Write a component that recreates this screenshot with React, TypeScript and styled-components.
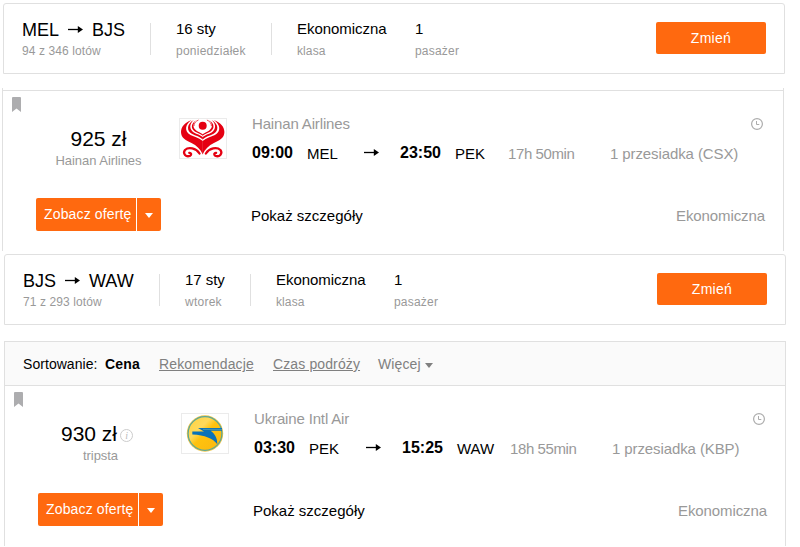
import React from "react";
import styled, { createGlobalStyle } from "styled-components";

interface Search {
  from: string;
  to: string;
  results: string;
  date: string;
  weekday: string;
  routeWidth: number;
  dateWidth: number;
}

interface Flight {
  price: string;
  seller: string;
  hasInfo?: boolean;
  airline: string;
  logo: React.ReactNode;
  departure: string;
  origin: string;
  arrival: string;
  destination: string;
  duration: string;
  stops: string;
}

const Arrow = () => (
  <svg width="15" height="8" viewBox="0 0 15 8">
    <path d="M0 3.5H11" stroke="#000" strokeWidth="1.3" />
    <path d="M9.8 0L15 3.5L9.8 7Z" fill="#000" />
  </svg>
);

const Bookmark = () => (
  <svg width="9" height="15" viewBox="0 0 9 15">
    <path d="M0 1Q0 0 1 0H8Q9 0 9 1V15L4.5 11.5L0 15Z" fill="#adadaf" />
  </svg>
);

const Clock = () => (
  <svg width="12" height="12" viewBox="0 0 12 12" fill="none" stroke="#acacac">
    <circle cx="6" cy="6" r="5.4" strokeWidth="1.2" />
    <path d="M5.5 3V6.5H8.3" strokeWidth="1" />
  </svg>
);

const HainanHalf = () => (
  <g>
    <path
      d="M12.5 2.2C6 4 2 9 2 14C2 20 7 22.5 12.5 25C17.5 27.5 21.5 31 23.8 36.5V23C20 19.8 15.5 19 11.5 17C5 13.5 6 6 12.5 2.2Z"
      fill="#e50012"
    />
    <path
      d="M14.8 2C7.5 6 7.5 12.8 12.8 15.8C17 18 21 18.6 23.8 21.5V19C21 16.7 18 16.2 14.8 14.4C10.3 11.5 10 6 14.8 2Z"
      fill="#e50012"
    />
    <path
      d="M17.4 2C11.5 5.5 11.8 11 15.8 13.4C18.5 15 21.5 15.7 23.8 17.8V16.2C21.5 14.4 19.2 13.8 17.2 12.4C13.6 9.8 13.5 5.5 17.4 2Z"
      fill="#e50012"
    />
    <path
      d="M19.5 2C16.5 3.3 14.9 5.5 15 8"
      fill="none"
      stroke="#e50012"
      strokeWidth="0.7"
    />
    <path
      d="M20.5 35.5C17 30 9.5 28.8 6 32C3.4 35.6 7 39.6 11.2 37.7C12.8 36.3 12 34.7 10.3 34.9"
      fill="none"
      stroke="#e50012"
      strokeWidth="2.3"
      strokeLinecap="round"
    />
  </g>
);

const HainanLogo = () => (
  <svg width="46" height="39" viewBox="1 1 46 39">
    <HainanHalf />
    <g transform="translate(47.4 0) scale(-1 1)">
      <HainanHalf />
    </g>
    <circle cx="23.7" cy="7.7" r="4" fill="#e50012" />
  </svg>
);

const UkraineLogo = () => (
  <svg width="46" height="39" viewBox="1 1 46 39">
    <defs>
      <linearGradient id="sun" x1="0" y1="0" x2="1" y2="1">
        <stop offset="0" stopColor="#ffd23c" />
        <stop offset="0.35" stopColor="#ffd95c" />
        <stop offset="0.5" stopColor="#ffc20e" />
        <stop offset="1" stopColor="#f9b712" />
      </linearGradient>
    </defs>
    <circle cx="24" cy="20.5" r="18.2" fill="#efc548" />
    <circle cx="24" cy="20.5" r="16.9" fill="url(#sun)" stroke="#57a69b" strokeWidth="1.2" />
    <path d="M17 15H41V17.8H29.5C33.5 20.5 36.3 24.5 36.3 31.2C32 25.5 24 22 11.3 21.5V18.4H23Z" fill="#0a72b8" />
    <path d="M22 16.4H41" stroke="#5f9fa8" strokeWidth="0.8" />
  </svg>
);

const searches: Search[] = [
  {
    from: "MEL",
    to: "BJS",
    results: "94 z 346 lotów",
    date: "16 sty",
    weekday: "poniedziałek",
    routeWidth: 128,
    dateWidth: 95,
  },
  {
    from: "BJS",
    to: "WAW",
    results: "71 z 293 lotów",
    date: "17 sty",
    weekday: "wtorek",
    routeWidth: 136,
    dateWidth: 65,
  },
];

const flights: Flight[] = [
  {
    price: "925 zł",
    seller: "Hainan Airlines",
    airline: "Hainan Airlines",
    logo: <HainanLogo />,
    departure: "09:00",
    origin: "MEL",
    arrival: "23:50",
    destination: "PEK",
    duration: "17h 50min",
    stops: "1 przesiadka (CSX)",
  },
  {
    price: "930 zł",
    seller: "tripsta",
    hasInfo: true,
    airline: "Ukraine Intl Air",
    logo: <UkraineLogo />,
    departure: "03:30",
    origin: "PEK",
    arrival: "15:25",
    destination: "WAW",
    duration: "18h 55min",
    stops: "1 przesiadka (KBP)",
  },
];

const SearchSummary = ({ search }: { search: Search }) => (
  <Summary>
    <SummaryCell width={search.routeWidth}>
      <Route>
        {search.from}
        <Arrow />
        {search.to}
      </Route>
      <Label>{search.results}</Label>
    </SummaryCell>
    <Separator />
    <SummaryCell width={search.dateWidth}>
      <Value>{search.date}</Value>
      <Label spacing={0.25}>{search.weekday}</Label>
    </SummaryCell>
    <Separator />
    <SummaryCell width={118}>
      <Value>Ekonomiczna</Value>
      <Label>klasa</Label>
    </SummaryCell>
    <SummaryCell>
      <Value>1</Value>
      <Label spacing={0.2}>pasażer</Label>
    </SummaryCell>
    <ChangeButton>Zmień</ChangeButton>
  </Summary>
);

const Offer = ({ flight }: { flight: Flight }) => (
  <StyledOffer>
    <BookmarkButton>
      <Bookmark />
    </BookmarkButton>
    <PriceColumn>
      <Price>
        {flight.price}
        {flight.hasInfo && <Info>i</Info>}
      </Price>
      <Seller>{flight.seller}</Seller>
      <DealButton>
        <span className="Text">Zobacz ofertę</span>
        <span className="Toggle">
          <Caret color="#fff" />
        </span>
      </DealButton>
    </PriceColumn>
    <LogoFrame>{flight.logo}</LogoFrame>
    <Details>
      <DetailsHeader>
        <span>{flight.airline}</span>
        <Clock />
      </DetailsHeader>
      <FlightRow>
        <Time>{flight.departure}</Time>
        <Airport>{flight.origin}</Airport>
        <Arrow />
        <Time>{flight.arrival}</Time>
        <Airport>{flight.destination}</Airport>
        <Muted spacing={-0.4}>{flight.duration}</Muted>
        <Muted spacing={-0.1}>{flight.stops}</Muted>
      </FlightRow>
      <DetailsFooter>
        <span>Pokaż szczegóły</span>
        <Muted spacing={-0.1}>Ekonomiczna</Muted>
      </DetailsFooter>
    </Details>
  </StyledOffer>
);

export default function App() {
  return (
    <>
      <GlobalStyle />
      <Page>
        <Section offset={0}>
          <SearchSummary search={searches[0]} />
        </Section>
        <Section offset={-1} gap={14}>
          <Results>
            <Offer flight={flights[0]} />
          </Results>
        </Section>
        <Section offset={1} gap={3}>
          <SearchSummary search={searches[1]} />
        </Section>
        <Section offset={1} gap={16}>
          <Results hasSorting>
            <SortBar>
              <span className="Caption">Sortowanie:</span>
              <b>Cena</b>
              <SortLink width={114}>Rekomendacje</SortLink>
              <SortLink width={105}>Czas podróży</SortLink>
              <More>
                Więcej <Caret color="#808080" />
              </More>
            </SortBar>
            <Offer flight={flights[1]} />
          </Results>
        </Section>
      </Page>
    </>
  );
}

const GlobalStyle = createGlobalStyle`
  body {
    margin: 0;
    background-color: #fff;
    font-family: "Liberation Sans", Arial, sans-serif;
    color: #000;
  }
`;

const Page = styled.div`
  height: 547px;
  box-sizing: border-box;
  padding: 3px 0 0 3px;
  overflow: hidden;
`;

const Section = styled("div").withConfig({
  shouldForwardProp: (prop) => !["offset", "gap"].includes(prop),
})<{ offset: number; gap?: number }>`
  width: 782px;
  margin-left: ${({ offset }) => offset}px;
  padding-top: ${({ gap }) => gap || 0}px;
`;

const Summary = styled.div`
  display: flex;
  height: 71px;
  box-sizing: border-box;
  border: 1px solid #e0e0e0;
  border-radius: 3px 3px 0 0;
  padding: 15px 18px 0;
`;

const SummaryCell = styled("div").withConfig({
  shouldForwardProp: (prop) => prop !== "width",
})<{ width?: number }>`
  box-sizing: border-box;
  width: ${({ width }) => (width ? width + "px" : "auto")};
  white-space: nowrap;
`;

const Route = styled.div`
  display: flex;
  align-items: flex-start;
  height: 25px;
  font-size: 18px;
  line-height: 22px;

  svg {
    margin: 7px 9px 0 9px;
  }
`;

const Value = styled.div`
  font-size: 15px;
  line-height: 20px;
  height: 25px;
  letter-spacing: -0.05px;
`;

const Label = styled("div").withConfig({
  shouldForwardProp: (prop) => prop !== "spacing",
})<{ spacing?: number }>`
  font-size: 12px;
  line-height: 14px;
  letter-spacing: ${({ spacing }) => spacing || 0.1}px;
  color: #999;
`;

const Separator = styled.div`
  width: 1px;
  height: 32px;
  margin: 4px 25px 0 0;
  background-color: #e0e0e0;
`;

const ChangeButton = styled.div`
  width: 110px;
  height: 32px;
  margin: 3px 0 0 auto;
  border-radius: 2px;
  background-color: #ff690f;
  color: #fff;
  font-size: 14px;
  letter-spacing: 0.3px;
  line-height: 32px;
  text-align: center;
`;

const Results = styled("div").withConfig({
  shouldForwardProp: (prop) => prop !== "hasSorting",
})<{ hasSorting?: boolean }>`
  border: 1px solid #e0e0e0;
  border-width: ${({ hasSorting }) => (hasSorting ? "1px 1px 0" : "0 1px")};
  padding-top: ${({ hasSorting }) => (hasSorting ? 0 : 2)}px;
`;

const SortBar = styled.div`
  display: flex;
  height: 43px;
  padding-left: 18px;
  background-color: #fafafa;
  font-size: 14px;
  line-height: 44px;

  .Caption {
    width: 82px;
    letter-spacing: 0.05px;
  }

  b {
    width: 54px;
    letter-spacing: 0.2px;
  }
`;

const SortLink = styled("span").withConfig({
  shouldForwardProp: (prop) => prop !== "width",
})<{ width: number }>`
  width: ${({ width }) => width}px;
  color: #808080;
  letter-spacing: 0.12px;
  text-decoration: underline;
`;

const More = styled.span`
  color: #808080;
  letter-spacing: 0.1px;
`;

const Caret = styled.i<{ color: string }>`
  display: inline-block;
  border: 4px solid transparent;
  border-top: 5px solid ${({ color }) => color};
  border-bottom: 0;
  vertical-align: 1px;
`;

const StyledOffer = styled.div`
  display: flex;
  height: 160px;
  border-top: 1px solid #e0e0e0;
`;

const BookmarkButton = styled.div`
  width: 24px;
  padding: 6px 0 0 9px;
  line-height: 0;
`;

const PriceColumn = styled.div`
  width: 125px;
  padding-top: 35px;
  text-align: center;
`;

const Price = styled.div`
  display: flex;
  justify-content: center;
  font-size: 21px;
  line-height: 26px;
`;

const Info = styled.span`
  width: 11px;
  height: 11px;
  margin: 8px 7px 0 3px;
  border: 1px solid #ccc;
  border-radius: 50%;
  color: #bbb;
  font: italic 10px/11px "Liberation Serif", serif;
`;

const Seller = styled.div`
  height: 46px;
  font-size: 13px;
  line-height: 17px;
  letter-spacing: -0.05px;
  color: #999;
`;

const DealButton = styled.div`
  display: flex;
  height: 33px;
  border-radius: 2px;
  overflow: hidden;
  color: #fff;
  font-size: 14px;
  line-height: 32px;

  .Text {
    width: 100px;
    padding-left: 8px;
    box-sizing: border-box;
    margin-right: 1px;
    background-color: #ff690f;
    letter-spacing: 0.15px;
    text-align: left;
    white-space: nowrap;
  }

  .Toggle {
    flex: 1;
    background-color: #ff690f;
  }
`;

const LogoFrame = styled.div`
  width: 46px;
  height: 39px;
  margin: 27px 25px 0 18px;
  border: 1px solid #ebebeb;
  line-height: 0;
`;

const Details = styled.div`
  flex: 1;
  padding: 24px 18px 0 0;
  font-size: 15px;
`;

const DetailsHeader = styled.div`
  display: flex;
  justify-content: space-between;
  height: 27px;
  line-height: 18px;
  color: #999;
  letter-spacing: -0.15px;

  svg {
    margin: 3px 2px 0 0;
  }
`;

const FlightRow = styled.div`
  display: grid;
  grid-template-columns: 55px 57px 36px 55px 53px 102px auto;
  height: 65px;
  line-height: 24px;
  white-space: nowrap;

  svg {
    margin-top: 7px;
  }
`;

const Time = styled.b`
  font-size: 16px;
  line-height: 21px;
`;

const Airport = styled.span`
  letter-spacing: -0.05px;
`;

const Muted = styled("span").withConfig({
  shouldForwardProp: (prop) => prop !== "spacing",
})<{ spacing: number }>`
  color: #999;
  letter-spacing: ${({ spacing }) => spacing}px;
`;

const DetailsFooter = styled.div`
  display: flex;
  justify-content: space-between;
  margin-left: -1px;
  line-height: 18px;
`;
